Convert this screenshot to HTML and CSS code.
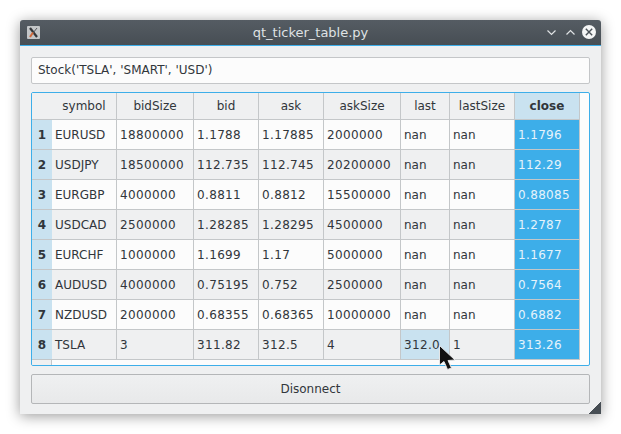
FILE: index.html
```html
<!DOCTYPE html>
<html lang="en">
  <head>
    <meta charset="UTF-8" />
    <title>qt_ticker_table.py</title>
    <link rel="stylesheet" href="styles.css">
  </head>
  <body>
    <div class="window">
      <div class="titlebar">
        <svg class="app-icon" width="13" height="13" viewBox="0 0 13 13">
          <rect width="13" height="13" rx="1" fill="#c3c6c8"/>
          <path d="M3 2 L10 11" stroke="#33363a" stroke-width="2.2"/>
          <path d="M10 2 L6 7" stroke="#55585c" stroke-width="1"/>
          <path d="M6 6.5 L3 11" stroke="#d0683a" stroke-width="2"/>
        </svg>
        <div class="title">qt_ticker_table.py</div>
        <div class="win-buttons">
          <svg width="11" height="7" viewBox="0 0 11 7"><path d="M1.5 1.5 L5.5 5.5 L9.5 1.5" fill="none" stroke="#dfe2e4" stroke-width="1.2"/></svg>
          <svg width="11" height="7" viewBox="0 0 11 7"><path d="M1.5 5.5 L5.5 1.5 L9.5 5.5" fill="none" stroke="#dfe2e4" stroke-width="1.2"/></svg>
          <svg class="close-btn" width="14" height="14" viewBox="0 0 14 14"><circle cx="7" cy="7" r="7" fill="#f4f5f5"/><path d="M3.8 3.8 L10.2 10.2 M10.2 3.8 L3.8 10.2" stroke="#4a5157" stroke-width="1.4"/></svg>
        </div>
      </div>
      <div class="content">
        <div class="line-edit">Stock('TSLA', 'SMART', 'USD')</div>
        <div class="table-box">
          <table class="ticker">
            <colgroup>
              <col class="c-row"><col class="c-symbol"><col class="c-bidsize"><col class="c-bid"><col class="c-ask"><col class="c-asksize"><col class="c-last"><col class="c-lastsize"><col class="c-close">
            </colgroup>
            <thead>
              <tr><th></th><th>symbol</th><th>bidSize</th><th>bid</th><th>ask</th><th>askSize</th><th>last</th><th>lastSize</th><th class="active">close</th></tr>
            </thead>
            <tbody>
              <tr><th class="row-num">1</th><td>EURUSD</td><td class="num">18800000</td><td class="num">1.1788</td><td class="num">1.17885</td><td class="num">2000000</td><td>nan</td><td>nan</td><td class="num sel">1.1796</td></tr>
              <tr class="alt"><th class="row-num">2</th><td>USDJPY</td><td class="num">18500000</td><td class="num">112.735</td><td class="num">112.745</td><td class="num">20200000</td><td>nan</td><td>nan</td><td class="num sel">112.29</td></tr>
              <tr><th class="row-num">3</th><td>EURGBP</td><td class="num">4000000</td><td class="num">0.8811</td><td class="num">0.8812</td><td class="num">15500000</td><td>nan</td><td>nan</td><td class="num sel">0.88085</td></tr>
              <tr class="alt"><th class="row-num">4</th><td>USDCAD</td><td class="num">2500000</td><td class="num">1.28285</td><td class="num">1.28295</td><td class="num">4500000</td><td>nan</td><td>nan</td><td class="num sel">1.2787</td></tr>
              <tr><th class="row-num">5</th><td>EURCHF</td><td class="num">1000000</td><td class="num">1.1699</td><td class="num">1.17</td><td class="num">5000000</td><td>nan</td><td>nan</td><td class="num sel">1.1677</td></tr>
              <tr class="alt"><th class="row-num">6</th><td>AUDUSD</td><td class="num">4000000</td><td class="num">0.75195</td><td class="num">0.752</td><td class="num">2500000</td><td>nan</td><td>nan</td><td class="num sel">0.7564</td></tr>
              <tr><th class="row-num">7</th><td>NZDUSD</td><td class="num">2000000</td><td class="num">0.68355</td><td class="num">0.68365</td><td class="num">10000000</td><td>nan</td><td>nan</td><td class="num sel">0.6882</td></tr>
              <tr class="alt"><th class="row-num">8</th><td>TSLA</td><td class="num">3</td><td class="num">311.82</td><td class="num">312.5</td><td class="num">4</td><td class="num hover">312.0</td><td class="num">1</td><td class="num sel">313.26</td></tr>
            </tbody>
          </table>
          <div class="table-rest"><div class="rest-head"></div></div>
        </div>
        <button class="btn">Disonnect</button>
      </div>
      <div class="grip"></div>
      <svg class="cursor" width="20" height="27" viewBox="0 0 20 27">
        <path d="M1.5 0.5 L1.5 20 L6 16.5 L9.5 24.5 L13.5 23 L10 15.5 L17 15 Z" fill="#111" stroke="#e4e5e6" stroke-width="1"/>
      </svg>
    </div>
  </body>
</html>
```

FILE: styles.css
```css
* {
  margin: 0;
  padding: 0;
  box-sizing: border-box;
}
body {
  font-family: "DejaVu Sans", sans-serif;
  font-size: 12px;
  color: #31363b;
  background-color: #ffffff;
  overflow: hidden;
}
.window {
  position: relative;
  width: 581px;
  height: 394px;
  margin: 20px;
  background-color: #eff0f1;
  border-radius: 3px 3px 0 0;
  box-shadow: 0 2px 14px rgba(0, 0, 0, 0.4);
}
.titlebar {
  position: relative;
  display: flex;
  align-items: center;
  justify-content: space-between;
  height: 26px;
  padding: 0 5px 1px 7px;
  background: linear-gradient(#555c63, #474e54);
  border-bottom: 1px solid #3daee9;
  border-radius: 3px 3px 0 0;
}
.title {
  position: absolute;
  left: 0;
  right: 0;
  text-align: center;
  color: #dfe2e4;
  font-size: 13px;
}
.app-icon {
  margin-top: 1px;
}
.win-buttons {
  display: flex;
  align-items: center;
  gap: 8px;
  position: relative;
}
.close-btn {
  margin-left: -2px;
}
.content {
  padding: 11px 11px 0;
}
.line-edit {
  height: 27px;
  line-height: 25px;
  padding: 0 6px;
  background-color: #fcfcfc;
  border: 1px solid #c4c6c8;
  border-radius: 2px;
}
.table-box {
  display: flex;
  flex-direction: column;
  height: 274px;
  margin-top: 8px;
  background-color: #fcfcfc;
  border: 1px solid #3daee9;
  border-radius: 2px;
  overflow: hidden;
}
.ticker {
  width: 548px;
  table-layout: fixed;
  border-collapse: separate;
  border-spacing: 0;
}
.c-row { width: 20px; }
.c-symbol { width: 65px; }
.c-bidsize { width: 77px; }
.c-bid { width: 65px; }
.c-ask { width: 65px; }
.c-asksize { width: 77px; }
.c-last { width: 49px; }
.c-lastsize { width: 65px; }
.c-close { width: 65px; }
.ticker thead th {
  height: 27px;
  font-weight: 400;
  text-align: center;
  background-color: #eff0f1;
  border-right: 1px solid #c4c7c9;
  border-bottom: 1px solid #c4c7c9;
}
.ticker thead th:first-child {
  border-right: none;
}
.ticker thead th.active {
  font-weight: 700;
  background-color: #c9e2f0;
}
.ticker td {
  height: 30px;
  padding: 0 3px;
  white-space: nowrap;
  overflow: hidden;
  background-color: #fcfcfc;
  border-right: 1px solid #c4c7c9;
  border-bottom: 1px solid #c4c7c9;
}
.ticker td.num {
  letter-spacing: 0.35px;
}
.ticker .alt td {
  background-color: #eff0f1;
}
.ticker .row-num {
  font-weight: 700;
  font-size: 12px;
  background-color: #c9e2f0;
  border-bottom: 1px solid #c4c7c9;
}
.ticker td.sel {
  color: #e6f3fb;
  background-color: #3daee9;
}
.ticker td.hover {
  background-color: #c9e2f0;
}
.table-rest {
  flex: 1;
}
.rest-head {
  width: 20px;
  height: 100%;
  background-color: #eff0f1;
  border-right: 1px solid #c4c7c9;
}
.btn {
  display: block;
  width: 100%;
  height: 30px;
  margin-top: 8px;
  font-family: inherit;
  font-size: 12px;
  color: #31363b;
  background: linear-gradient(#eff0f1, #e8e9ea);
  border: 1px solid #b4b6b8;
  border-radius: 2px;
}
.grip {
  position: absolute;
  right: 0;
  bottom: 0;
  width: 13px;
  height: 13px;
  background: linear-gradient(135deg, transparent 50%, #474e54 50%);
}
.cursor {
  position: absolute;
  left: 418px;
  top: 325px;
}
```
